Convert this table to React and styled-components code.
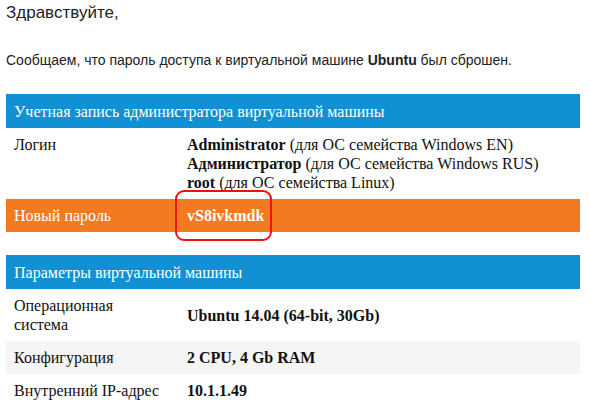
import styled, { createGlobalStyle } from "styled-components";

const GlobalStyle = createGlobalStyle`
    body {
        margin: 0;
        background: #fff;
    }
`;

const Page = styled.div`
    padding: 3px 10px 0 6px;
    width: 590px;
    box-sizing: border-box;
`;

const Greeting = styled.p`
    margin: 0;
    font-family: "Liberation Sans", Arial, sans-serif;
    font-size: 17px;
    line-height: 20px;
    color: #222;
`;

const Message = styled.p`
    margin: 28px 0 25px;
    font-family: "Liberation Sans", Arial, sans-serif;
    font-size: 14px;
    line-height: 18px;
    color: #222;

    b {
        font-weight: bold;
    }
`;

const Section = styled.div`
    display: flex;
    flex-direction: column;
    margin-bottom: ${(props) => props.gap || 0}px;
    font-family: "Liberation Serif", "Times New Roman", serif;
    font-size: 16px;
    line-height: 19px;
    color: #111;
`;

const SectionHeader = styled.div`
    display: flex;
    align-items: center;
    height: 34px;
    padding: 0 8px;
    background: #1191d3;
    color: #fff;
`;

const Row = styled.div`
    display: grid;
    grid-template-columns: 173px 1fr;
    align-items: center;
    background: ${(props) =>
        props.accent ? "#f47a22" : props.shaded ? "#f5f5f5" : "#fff"};
    color: ${(props) => (props.accent ? "#fff" : "#111")};
`;

const Label = styled.div`
    align-self: ${(props) => (props.top ? "start" : "center")};
    padding: 7px 8px;
`;

const Value = styled.div`
    padding: 7px 8px;
    display: flex;
    flex-direction: column;

    b {
        font-weight: bold;
    }
`;

const Password = styled.span`
    position: relative;
    align-self: flex-start;
    font-weight: bold;

    &::after {
        content: "";
        position: absolute;
        top: -16px;
        bottom: -16px;
        left: -12px;
        right: -8px;
        border: 2px solid #ee1111;
        border-radius: 9px;
    }
`;

const App = () => {
    return (
        <Page>
            <GlobalStyle />
            <Greeting>Здравствуйте,</Greeting>
            <Message>
                Сообщаем, что пароль доступа к виртуальной машине <b>Ubuntu</b>{" "}
                был сброшен.
            </Message>

            <Section gap={23}>
                <SectionHeader>Учетная запись администратора виртуальной машины</SectionHeader>
                <Row>
                    <Label top>Логин</Label>
                    <Value>
                        <span>
                            <b>Administrator</b> (для ОС семейства Windows EN)
                        </span>
                        <span>
                            <b>Администратор</b> (для ОС семейства Windows RUS)
                        </span>
                        <span>
                            <b>root</b> (для ОС семейства Linux)
                        </span>
                    </Value>
                </Row>
                <Row accent>
                    <Label>Новый пароль</Label>
                    <Value>
                        <Password>vS8ivkmdk</Password>
                    </Value>
                </Row>
            </Section>

            <Section>
                <SectionHeader>Параметры виртуальной машины</SectionHeader>
                <Row>
                    <Label>
                        Операционная
                        <br />
                        система
                    </Label>
                    <Value>
                        <b>Ubuntu 14.04 (64-bit, 30Gb)</b>
                    </Value>
                </Row>
                <Row shaded>
                    <Label>Конфигурация</Label>
                    <Value>
                        <b>2 CPU, 4 Gb RAM</b>
                    </Value>
                </Row>
                <Row>
                    <Label>Внутренний IP-адрес</Label>
                    <Value>
                        <b>10.1.1.49</b>
                    </Value>
                </Row>
            </Section>
        </Page>
    );
};

export default App;
